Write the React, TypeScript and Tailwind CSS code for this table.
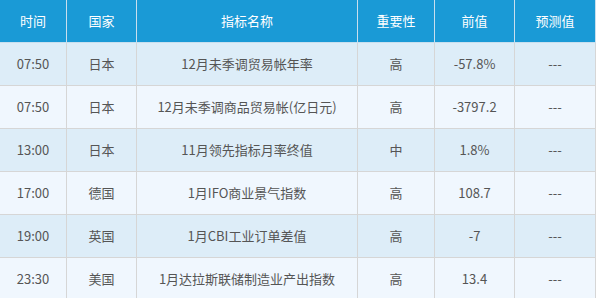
import React from "react";

const headers = ["时间", "国家", "指标名称", "重要性", "前值", "预测值"];
const rows = [
  ["07:50", "日本", "12月未季调贸易帐年率", "高", "-57.8%", "---"],
  ["07:50", "日本", "12月未季调商品贸易帐(亿日元)", "高", "-3797.2", "---"],
  ["13:00", "日本", "11月领先指标月率终值", "中", "1.8%", "---"],
  ["17:00", "德国", "1月IFO商业景气指数", "高", "108.7", "---"],
  ["19:00", "英国", "1月CBI工业订单差值", "高", "-7", "---"],
  ["23:30", "美国", "1月达拉斯联储制造业产出指数", "高", "13.4", "---"],
];

const grid = "grid grid-cols-[67px_70px_221px_77px_80px_81px]";

export default function App() {
  return (
    <div
      className="w-[596px] h-[298px] overflow-hidden bg-white"
      style={{ fontFamily: '"Noto Sans CJK SC", "Noto Sans", sans-serif' }}
    >
      <div className={`${grid} h-[43px] bg-[#1a9ad6] text-white text-[13px]`}>
        {headers.map((h) => (
          <div
            key={h}
            className="flex items-center justify-center border-r border-b border-[#c9dfee]"
          >
            {h}
          </div>
        ))}
      </div>
      {rows.map((r, i) => (
        <div
          key={i}
          className={`${grid} h-[43px] text-[13px] text-[#555555] ${
            i % 2 === 0 ? "bg-[#ddedf8]" : "bg-[#f0f7fe]"
          }`}
        >
          {r.map((c, j) => (
            <div
              key={j}
              className="flex items-center justify-center border-r border-b border-[#d6d6d6]"
            >
              {c}
            </div>
          ))}
        </div>
      ))}
    </div>
  );
}
